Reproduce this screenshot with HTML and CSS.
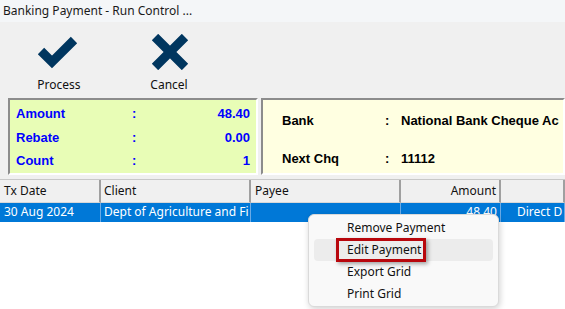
FILE: index.html
```html
<!DOCTYPE html>
<html lang="en">
<head>
  <meta charset="UTF-8">
  <title>Banking Payment - Run Control</title>
  <link rel="stylesheet" href="styles.css">
</head>
<body>
  <!-- title bar -->
  <div class="titlebar">Banking Payment - Run Control ...</div>

  <!-- toolbar -->
  <div class="toolbar">
    <div class="tool-btn">
      <svg class="tool-icon" viewBox="0 0 44 36" width="44" height="36">
        <polyline points="4,17 15,28 37,6" fill="none" stroke="#00365f" stroke-width="9" stroke-linecap="butt" stroke-linejoin="miter"/>
      </svg>
      <span class="tool-label">Process</span>
    </div>
    <div class="tool-btn">
      <svg class="tool-icon" viewBox="0 0 44 36" width="44" height="36">
        <path d="M8,3 L38,33 M38,3 L8,33" fill="none" stroke="#00365f" stroke-width="9"/>
      </svg>
      <span class="tool-label">Cancel</span>
    </div>
  </div>

  <!-- summary panels -->
  <div class="panels">
    <div class="panel totals">
      <div class="total-row"><span class="t-label">Amount</span><span class="t-colon">:</span><span class="t-value">48.40</span></div>
      <div class="total-row"><span class="t-label">Rebate</span><span class="t-colon">:</span><span class="t-value">0.00</span></div>
      <div class="total-row"><span class="t-label">Count</span><span class="t-colon">:</span><span class="t-value">1</span></div>
    </div>
    <div class="panel bank">
      <div class="bank-row"><span class="b-label">Bank</span><span class="b-colon">:</span><span class="b-value">National Bank Cheque Ac</span></div>
      <div class="bank-row"><span class="b-label">Next Chq</span><span class="b-colon">:</span><span class="b-value">11112</span></div>
    </div>
  </div>

  <!-- grid -->
  <div class="grid">
    <div class="grid-head">
      <div class="cell c-date">Tx Date</div>
      <div class="cell c-client">Client</div>
      <div class="cell c-payee">Payee</div>
      <div class="cell c-amount">Amount</div>
      <div class="cell c-type"></div>
    </div>
    <div class="grid-row selected">
      <div class="cell c-date">30 Aug 2024</div>
      <div class="cell c-client">Dept of Agriculture and Fi</div>
      <div class="cell c-payee"></div>
      <div class="cell c-amount">48.40</div>
      <div class="cell c-type">Direct D</div>
    </div>
  </div>

  <!-- context menu -->
  <div class="context-menu">
    <div class="menu-item">Remove Payment</div>
    <div class="menu-item hover">Edit Payment</div>
    <div class="menu-item">Export Grid</div>
    <div class="menu-item">Print Grid</div>
  </div>
  <div class="highlight-box"></div>
</body>
</html>
```

FILE: styles.css
```css
body { margin: 0; width: 565px; height: 309px; overflow: hidden; background: #ffffff; font-family: 'Noto Sans', 'Open Sans', sans-serif; position: relative; }

.titlebar { height: 22px; line-height: 21px; padding-left: 3px; font-size: 12px; color: #1a1a1a; background: #f4f6f8; white-space: nowrap; }

.toolbar { height: 76px; background: #f0f0f0; display: flex; gap: 52px; padding-left: 30px; box-sizing: border-box; padding-top: 12px; }
.tool-btn { width: 58px; display: flex; flex-direction: column; align-items: center; }
.tool-icon { display: block; }
.tool-label { font-size: 12px; color: #111; margin-top: 6px; }

.panels { height: 81px; background: #f0f0f0; display: flex; padding-left: 8px; gap: 3px; box-sizing: border-box; padding-bottom: 4px; }
.panel { border: 2px solid; border-color: #8c8c8c #ffffff #ffffff #8c8c8c; box-sizing: border-box; font-family: 'Liberation Sans', Arial, sans-serif; font-weight: bold; font-size: 13px; }

.totals { width: 250px; background: #e8fdb6; color: #0000ff; padding: 2px 6px 0 6px; }
.total-row { display: flex; height: 23.5px; align-items: center; }
.t-label { width: 116px; flex-shrink: 0; }
.t-colon { width: 20px; flex-shrink: 0; }
.t-value { flex: 1; text-align: right; }

.bank { flex: 1; background: #ffffe1; color: #000; padding: 1px 0 0 19px; overflow: hidden; white-space: nowrap; }
.bank-row { display: flex; height: 38px; align-items: center; }
.b-label { width: 103px; flex-shrink: 0; }
.b-colon { width: 16px; flex-shrink: 0; }

.grid { border-top: 1px solid #c8c8c8; background: #fff; }
.grid-head { display: flex; height: 23px; background: #f0f0f0; font-size: 12px; color: #111; }
.grid-head .cell { border-right: 2px solid #a0a0a0; border-bottom: 1px solid #d8d8d8; line-height: 22px; }
.grid-row { display: flex; height: 19px; font-size: 12px; }
.grid-row.selected { background: #0078d7; color: #ffffff; }
.grid-row .cell { border-right: 1px solid #6aaae6; line-height: 18px; }
.cell { box-sizing: border-box; padding: 0 4px; white-space: nowrap; overflow: hidden; }
.c-date { width: 101px; }
.c-client { width: 150px; padding: 0 0 0 3px; }
.c-payee { width: 150px; }
.c-amount { width: 100px; text-align: right; padding-right: 3px; }
.c-type { flex: 1; padding-left: 16px; }

.context-menu { position: absolute; left: 308px; top: 214px; width: 191px; height: 93px; box-sizing: border-box; background: #f9f9f9; border: 1px solid #dadada; border-radius: 6px; box-shadow: 1px 2px 6px rgba(0,0,0,0.18); padding: 2px 5px; }
.menu-item { height: 22px; line-height: 22px; padding-left: 33px; font-size: 12px; color: #111; border-radius: 4px; }
.menu-item.hover { background: #ececec; }
.highlight-box { position: absolute; left: 336px; top: 238px; width: 90px; height: 24px; box-sizing: border-box; border: 3px solid #b8070d; box-shadow: 2px 2px 4px rgba(0,0,0,0.35); }
```
